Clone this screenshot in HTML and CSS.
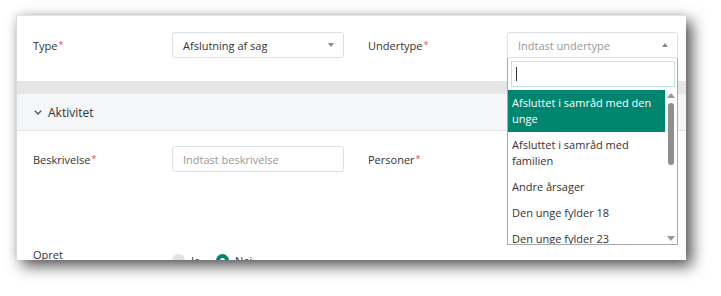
FILE: index.html
```html
<!DOCTYPE html>
<html lang="da">
<head>
<meta charset="utf-8">
<title>Afslutning af sag</title>
<link rel="stylesheet" href="styles.css">
</head>
<body>
<div class="window">
  <div class="section top">
    <div class="row">
      <div class="label">Type<span class="req">*</span></div>
      <div class="select"><span class="val">Afslutning af sag</span><span class="arrow down"></span></div>
      <div class="label">Undertype<span class="req">*</span></div>
      <div class="select open"><span class="ph">Indtast undertype</span><span class="arrow up"></span>
        <div class="dropdown">
          <div class="search"><span class="caret"></span></div>
          <div class="results">
            <ul class="options">
              <li class="opt active">Afsluttet i samråd med den unge</li>
              <li class="opt">Afsluttet i samråd med familien</li>
              <li class="opt">Andre årsager</li>
              <li class="opt">Den unge fylder 18</li>
              <li class="opt">Den unge fylder 23</li>
            </ul>
            <div class="scrollbar">
              <span class="sb-arrow sb-up"></span>
              <span class="sb-thumb"></span>
              <span class="sb-fill"></span>
              <span class="sb-arrow sb-down"></span>
            </div>
          </div>
        </div>
      </div>
    </div>
  </div>
  <div class="band"></div>
  <div class="header">
    <svg class="chev" width="8" height="5" viewBox="0 0 8 5"><polyline points="0.8,0.8 4,4 7.2,0.8" fill="none" stroke="#555" stroke-width="1.4"/></svg>
    <span>Aktivitet</span>
  </div>
  <div class="section main">
    <div class="row">
      <div class="label">Beskrivelse<span class="req">*</span></div>
      <div class="input"><span class="ph">Indtast beskrivelse</span></div>
      <div class="label">Personer<span class="req">*</span></div>
      <div></div>
    </div>
    <div class="row row2">
      <div class="label">Opret<br>opfølgning</div>
      <div class="radios">
        <span class="radio off"></span><span class="rtext">Ja</span>
        <span class="radio on"></span><span class="rtext">Nej</span>
      </div>
    </div>
  </div>
</div>
</body>
</html>
```

FILE: styles.css
```css
* { box-sizing: border-box; }
html, body { margin: 0; padding: 0; background: #fff; }
body {
  width: 721px;
  height: 296px;
  overflow: hidden;
  padding: 15px 0 0 16px;
  font-family: "Open Sans", "Noto Sans", sans-serif;
  font-size: 11px;
  color: #333;
}
.window {
  width: 670px;
  height: 245px;
  background: #fff;
  border-left: 1px solid #dcdcdc;
  border-top: 1px solid #e4e4e4;
  box-shadow: 6px 6px 14px rgba(0,0,0,0.68), -2px -2px 6px rgba(0,0,0,0.06);
  overflow: hidden;
  position: relative;
}
.section { padding: 0 8px 0 16px; }
.row {
  display: grid;
  grid-template-columns: 139px 172px 163px 171px;
  align-items: center;
}
.row > :nth-child(3) { margin-left: 24px; }
.top { height: 65px; padding-top: 16px; }
.label { font-size: 11px; color: #333; }
.req { color: #e2475e; font-size: 9px; vertical-align: 2px; margin-left: 1px; }
.select, .input {
  height: 26px;
  border: 1px solid #dcdfe3;
  border-radius: 3px;
  display: flex;
  align-items: center;
  padding: 0 10px;
  position: relative;
  background: #fff;
}
.select .val { flex: 1; color: #333; }
.ph { flex: 1; color: #999; }
.select.open { border-bottom-left-radius: 0; border-bottom-right-radius: 0; }
.arrow { width: 0; height: 0; border-left: 3px solid transparent; border-right: 3px solid transparent; margin-right: -1px; }
.arrow.down { border-top: 4px solid #888; }
.arrow.up { border-bottom: 4px solid #888; }
.dropdown {
  position: absolute;
  left: -1px;
  right: -1px;
  top: 25px;
  border: 1px solid #aaa;
  border-top: none;
  background: #fff;
  z-index: 5;
  padding-top: 3px;
}
.search {
  margin: 0 2px 0 3px;
  height: 26px;
  border: 1px solid #c4e4dd;
  display: flex;
  align-items: center;
  padding-left: 4px;
}
.caret { width: 1px; height: 14px; background: #333; }
.results { display: flex; margin-top: 3px; height: 154px; overflow: hidden; }
.options { list-style: none; margin: 0; padding: 0; flex: 1; line-height: 16px; }
.opt { padding: 5px 4px; color: #333; }
.opt.active { background: #00856f; color: #fff; }
.scrollbar { width: 12px; display: flex; flex-direction: column; align-items: center; padding: 3px 0 3px; }
.sb-arrow { width: 0; height: 0; border-left: 4px solid transparent; border-right: 4px solid transparent; }
.sb-up { border-bottom: 5px solid #999; }
.sb-down { border-top: 5px solid #999; }
.sb-thumb { width: 6px; height: 62px; background: #8f8f8f; border-radius: 3px; margin-top: 5px; }
.sb-fill { flex: 1; }
.band { height: 13px; background: #e6e6e6; }
.header {
  height: 37px;
  background: #f4f6f8;
  border-bottom: 1px solid #e3e6e8;
  display: flex;
  align-items: center;
  padding-left: 17px;
  font-size: 12px;
  color: #333;
}
.chev { margin-right: 6px; }
.main { padding-top: 15px; }
.row2 { margin-top: 75px; align-items: start; }
.row2 .label { line-height: 15px; }
.radios { display: flex; align-items: center; padding-top: 6px; line-height: 15px; }
.radio { width: 13px; height: 13px; border-radius: 50%; display: inline-block; }
.radio.off { background: #e2e2e2; }
.radio.on { background: #00856f; position: relative; }
.radio.on::after { content: ""; position: absolute; left: 4px; top: 4px; width: 5px; height: 5px; border-radius: 50%; background: #fff; }
.rtext { margin: 0 16px 0 6px; }
```
